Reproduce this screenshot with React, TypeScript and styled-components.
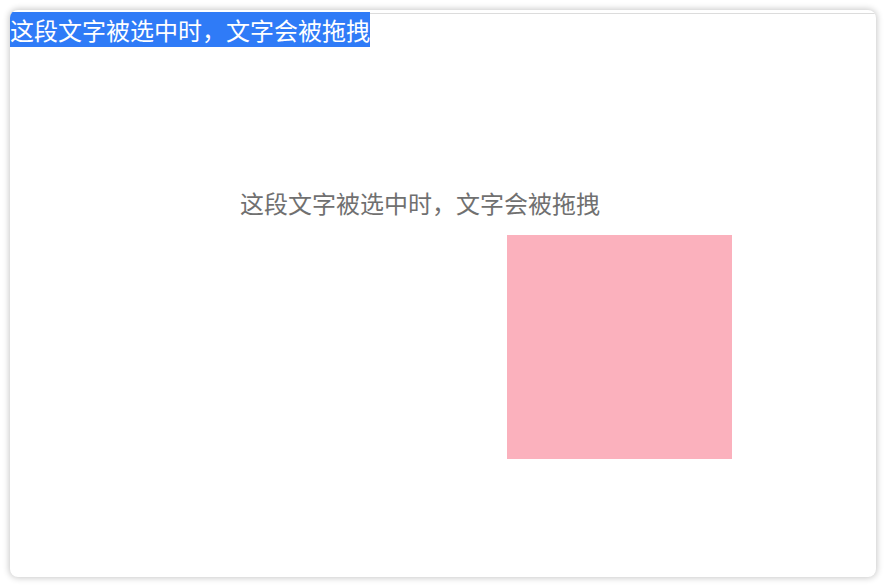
import React from "react";
import styled, { createGlobalStyle } from "styled-components";

const Global = createGlobalStyle`
  html, body { margin: 0; padding: 0; background: #ffffff; }
  body { font-family: "Noto Sans CJK SC", "Noto Sans", sans-serif; }
  #root { width: 886px; height: 586px; }
`;

const Stage = styled.div`
  width: 886px;
  height: 586px;
  box-sizing: border-box;
  padding: 10px 10px 9px 10px;
  background: #ffffff;
  display: flex;
`;

const Card = styled.div`
  flex: 1;
  background: #ffffff;
  border-radius: 8px;
  box-shadow: 0 0 6px 1px rgba(0, 0, 0, 0.22);
  display: flex;
  flex-direction: column;
  overflow: hidden;
`;

const TopRule = styled.div`
  height: 3px;
  border-bottom: 1px solid #dcdcdc;
  flex: none;
`;

const Content = styled.div`
  display: flex;
  flex-direction: column;
  align-items: flex-start;
`;

const Line = styled.p<{ $selected?: boolean; $indent?: number; $top?: number }>`
  margin: ${(p) => p.$top ?? 0}px 0 0 ${(p) => p.$indent ?? 0}px;
  font-size: 24px;
  line-height: 31px;
  color: ${(p) => (p.$selected ? "#ffffff" : "#707070")};
  white-space: nowrap;
`;

const Highlight = styled.span`
  background: #2f7bf7;
  color: #ffffff;
`;

const DragBox = styled.div`
  width: 225px;
  height: 224px;
  margin: 17px 0 0 497px;
  background: #fbb1bd;
`;

export default function App() {
  return (
    <>
      <Global />
      <Stage>
        <Card>
          <TopRule />
          <Content>
            <Line $selected>
              <Highlight>这段文字被选中时，文字会被拖拽</Highlight>
            </Line>
            <Line $indent={230} $top={142}>
              这段文字被选中时，文字会被拖拽
            </Line>
            <DragBox />
          </Content>
        </Card>
      </Stage>
    </>
  );
}
